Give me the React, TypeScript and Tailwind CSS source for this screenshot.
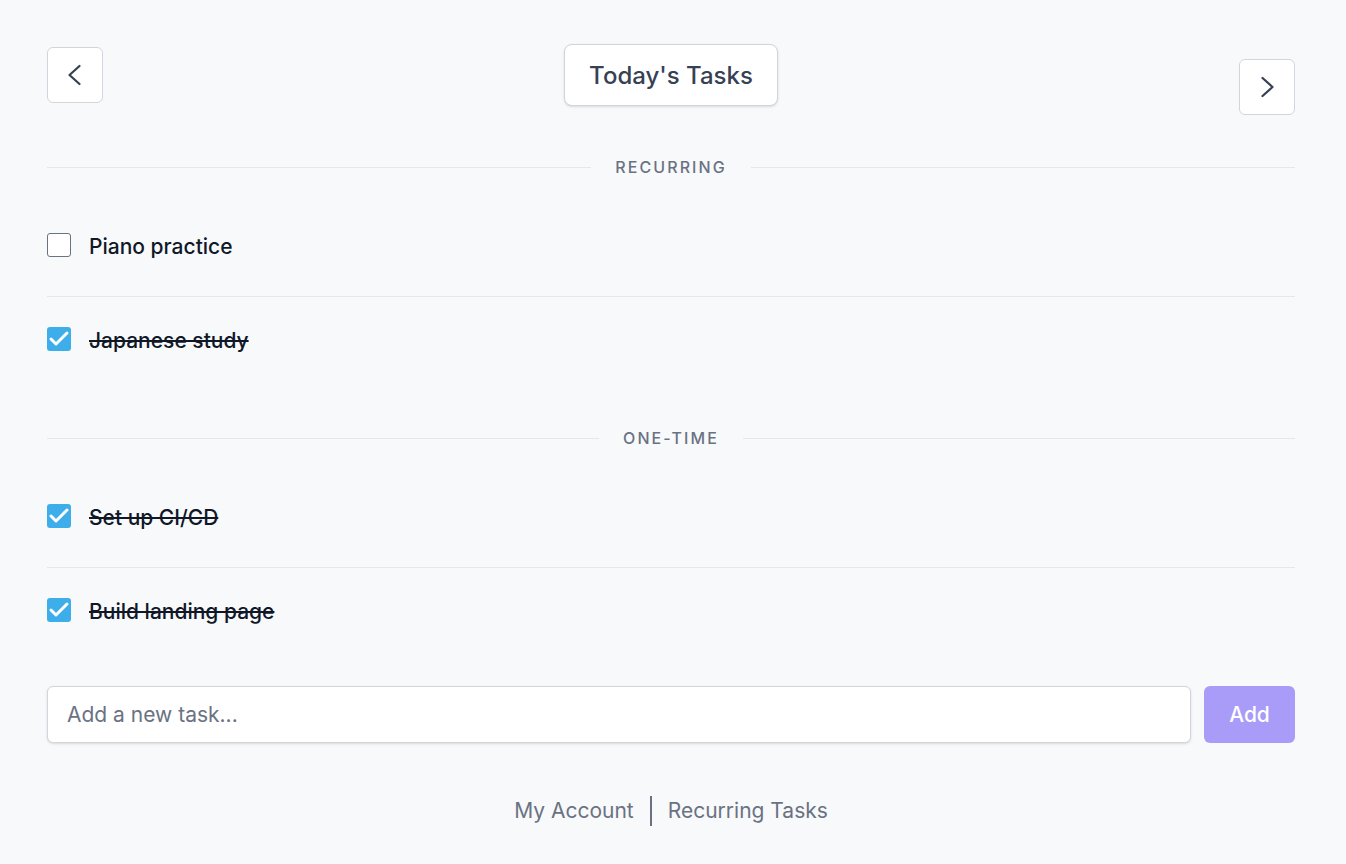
import { Check } from "lucide-react";

type Task = { id: number; title: string; done: boolean };

const recurring: Task[] = [
  { id: 1, title: "Piano practice", done: false },
  { id: 2, title: "Japanese study", done: true },
];

const oneTime: Task[] = [
  { id: 3, title: "Set up CI/CD", done: true },
  { id: 4, title: "Build landing page", done: true },
];

function Chevron({ dir }: { dir: "left" | "right" }) {
  return (
    <svg
      viewBox="0 0 24 24"
      className="h-6 w-6"
      fill="none"
      stroke="currentColor"
      strokeWidth={2.25}
      strokeLinecap="round"
      strokeLinejoin="round"
    >
      {dir === "left" ? (
        <polyline points="16.5 3 6.5 12 16.5 21" />
      ) : (
        <polyline points="7.5 3 17.5 12 7.5 21" />
      )}
    </svg>
  );
}

function Divider({ label }: { label: string }) {
  return (
    <div className="flex h-5 items-center">
      <div className="h-px flex-1 bg-gray-200" />
      <span className="mx-6 text-base font-medium uppercase leading-5 tracking-[0.13em] text-gray-500">
        {label}
      </span>
      <div className="h-px flex-1 bg-gray-200" />
    </div>
  );
}

function TaskRow({ task, last }: { task: Task; last: boolean }) {
  return (
    <li
      className={
        last
          ? "flex items-center pb-[39px] pt-[30px]"
          : "flex items-center border-b border-gray-200 pb-[39px] pt-[30px]"
      }
    >
      {task.done ? (
        <span className="flex h-6 w-6 items-center justify-center rounded-[3px] bg-[#3eaeea]">
          <Check className="h-6 w-6 text-white" strokeWidth={3} />
        </span>
      ) : (
        <span className="h-6 w-6 rounded-[3px] border-[1.5px] border-gray-500 bg-white" />
      )}
      <span
        className={
          task.done
            ? "ml-[18px] h-6 text-[21px] font-medium leading-[27px] text-gray-900 line-through"
            : "ml-[18px] h-6 text-[21px] font-medium leading-[27px] text-gray-900"
        }
      >
        {task.title}
      </span>
    </li>
  );
}

function Section({ label, tasks }: { label: string; tasks: Task[] }) {
  return (
    <section>
      <Divider label={label} />
      <ul className="mt-[26px]">
        {tasks.map((t, i) => (
          <TaskRow key={t.id} task={t} last={i === tasks.length - 1} />
        ))}
      </ul>
    </section>
  );
}

export default function App() {
  return (
    <div className="min-h-screen bg-[#f8f9fb] font-['Inter',sans-serif]">
      <main className="pb-10 pl-[47px] pr-[51px] pt-[44px]">
        <header className="flex items-start justify-between">
          <button className="mt-[3px] flex h-14 w-14 items-center justify-center rounded-md border border-gray-300 bg-white text-gray-700">
            <Chevron dir="left" />
          </button>
          <h1 className="flex h-[62px] items-center rounded-lg border border-gray-300 bg-white px-6 pt-[2px] text-2xl font-medium text-gray-700 shadow-sm">
            Today's Tasks
          </h1>
          <button className="mt-[15px] flex h-14 w-14 items-center justify-center rounded-md border border-gray-300 bg-white text-gray-700">
            <Chevron dir="right" />
          </button>
        </header>

        <div className="mt-[42px]">
          <Section label="Recurring" tasks={recurring} />
        </div>
        <div className="mt-[38px]">
          <Section label="One-time" tasks={oneTime} />
        </div>

        <form className="mt-[25px] flex gap-[13px]" onSubmit={(e) => e.preventDefault()}>
          <input
            className="h-[57px] flex-1 rounded-md border border-gray-300 bg-white px-[19px] text-[21px] text-gray-900 shadow-sm outline-none placeholder:text-gray-500"
            placeholder="Add a new task..."
          />
          <button className="h-[57px] w-[91px] rounded-md bg-[#a99cf8] text-[21px] font-medium text-white">
            Add
          </button>
        </form>

        <footer className="mt-[52px] flex items-center justify-center text-[21px] text-gray-500">
          <a href="#">My Account</a>
          <span className="mx-4 h-[30px] w-[2px] bg-gray-500" />
          <a href="#">Recurring Tasks</a>
        </footer>
      </main>
    </div>
  );
}
